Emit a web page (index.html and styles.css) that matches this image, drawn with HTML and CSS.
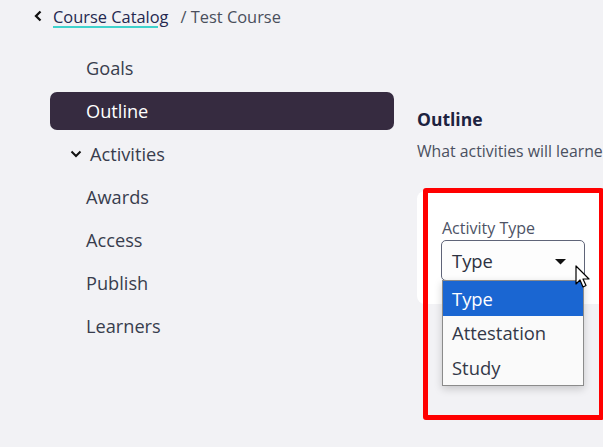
FILE: index.html
```html
<!DOCTYPE html>
<html>
<head>
<meta charset="utf-8">
<link rel="stylesheet" href="styles.css">
</head>
<body>
<div class="page">
  <div class="crumbs">
    <svg class="back" width="10" height="12" viewBox="0 0 10 12"><path d="M7.5 1.5 L3 6 L7.5 10.5" fill="none" stroke="#111" stroke-width="2.3"/></svg>
    <a class="crumb-link">Course Catalog</a>
    <span class="crumb-cur">/ Test Course</span>
  </div>
  <div class="layout">
    <nav class="side">
      <div class="item">Goals</div>
      <div class="item active">Outline</div>
      <div class="item sub">
        <svg class="chev" width="12" height="8" viewBox="0 0 12 8"><path d="M1.5 1.5 L6 6 L10.5 1.5" fill="none" stroke="#111" stroke-width="2"/></svg>
        <span>Activities</span>
      </div>
      <div class="item">Awards</div>
      <div class="item">Access</div>
      <div class="item">Publish</div>
      <div class="item">Learners</div>
    </nav>
    <main class="main">
      <h2 class="title">Outline</h2>
      <p class="desc">What activities will learners complete in this course?</p>
      <div class="card">
        <div class="label">Activity Type</div>
        <div class="field">
          <div class="select">
            <span>Type</span>
            <svg class="caret" width="11" height="6" viewBox="0 0 11 6"><path d="M0 0 H11 L5.5 5.5 Z" fill="#111"/></svg>
          </div>
          <ul class="menu">
            <li class="opt sel">Type</li>
            <li class="opt">Attestation</li>
            <li class="opt">Study</li>
          </ul>
          <svg class="cursor" width="16" height="25" viewBox="0 0 16 25"><path d="M1 1 L1 19 L5 15 L8 22 L11 20.5 L8 14 L14 14 Z" fill="#fff" stroke="#000" stroke-width="1.2" stroke-linejoin="round"/></svg>
        </div>
      </div>
    </main>
  </div>
  <div class="highlight"></div>
</div>
</body>
</html>
```

FILE: styles.css
```css
html, body {
  margin: 0;
  padding: 0;
  background: #ffffff;
}
body {
  font-family: "Open Sans", "Noto Sans", sans-serif;
  color: #3b4050;
}
.page {
  position: relative;
  width: 603px;
  height: 447px;
  background: #f2f2f5;
  overflow: hidden;
}
.crumbs {
  display: flex;
  align-items: center;
  height: 22px;
  padding: 5px 0 0 33px;
  font-size: 16.4px;
}
.back {
  margin-right: 10px;
}
.crumb-link {
  color: #24284f;
  text-decoration: underline;
  text-decoration-color: #3fd2cc;
  text-decoration-thickness: 2px;
  text-underline-offset: 3px;
  margin-right: 12px;
}
.crumb-cur {
  color: #4a4f5c;
}
.layout {
  display: flex;
  gap: 23px;
  padding-top: 22px;
}
.side {
  width: 344px;
  margin-left: 50px;
  display: flex;
  flex-direction: column;
  gap: 5px;
}
.item {
  height: 38px;
  display: flex;
  align-items: center;
  padding-left: 36px;
  font-size: 18.2px;
  color: #383d4d;
  border-radius: 7px;
}
.item.active {
  background: #362b40;
  color: #ffffff;
}
.item.sub {
  padding-left: 20px;
}
.chev {
  margin-right: 8px;
}
.main {
  flex: 1;
  min-width: 0;
  padding-top: 59px;
}
.title {
  margin: 0;
  font-size: 17.5px;
  font-weight: 700;
  line-height: 22px;
  color: #1d2340;
}
.desc {
  margin: 10px 0 0;
  font-size: 15.8px;
  line-height: 22px;
  white-space: nowrap;
  color: #4a5060;
}
.card {
  margin-top: 29px;
  width: 260px;
  height: 113px;
  box-sizing: border-box;
  background: #ffffff;
  border-radius: 8px;
  padding: 26px 0 0 25px;
}
.label {
  font-size: 16px;
  line-height: 22px;
  color: #4d5366;
}
.field {
  position: relative;
  margin-top: 1px;
  margin-left: -1px;
  width: 144px;
}
.select {
  box-sizing: border-box;
  height: 41px;
  border: 1.5px solid #5f6478;
  border-radius: 5px;
  background: #fdfdfd;
  display: flex;
  align-items: center;
  justify-content: space-between;
  padding: 0 18px 0 10px;
  font-size: 18.4px;
  color: #2e3242;
}
.caret {
  margin-top: 3px;
}
.menu {
  position: absolute;
  left: 1px;
  top: 40px;
  width: 142px;
  box-sizing: border-box;
  margin: 0;
  padding: 0;
  list-style: none;
  background: #fafafa;
  border: 1px solid #8b8b8b;
  box-shadow: 0 3px 8px rgba(0, 0, 0, 0.18);
}
.opt {
  height: 34.5px;
  display: flex;
  align-items: center;
  padding-left: 9px;
  font-size: 18.4px;
  color: #333848;
}
.opt.sel {
  background: #1a66d2;
  color: #ffffff;
}
.cursor {
  position: absolute;
  left: 134px;
  top: 25px;
}
.highlight {
  position: absolute;
  left: 423px;
  top: 188px;
  width: 181px;
  height: 232px;
  box-sizing: border-box;
  border: 5px solid #ff0000;
  border-radius: 3px;
}
```
